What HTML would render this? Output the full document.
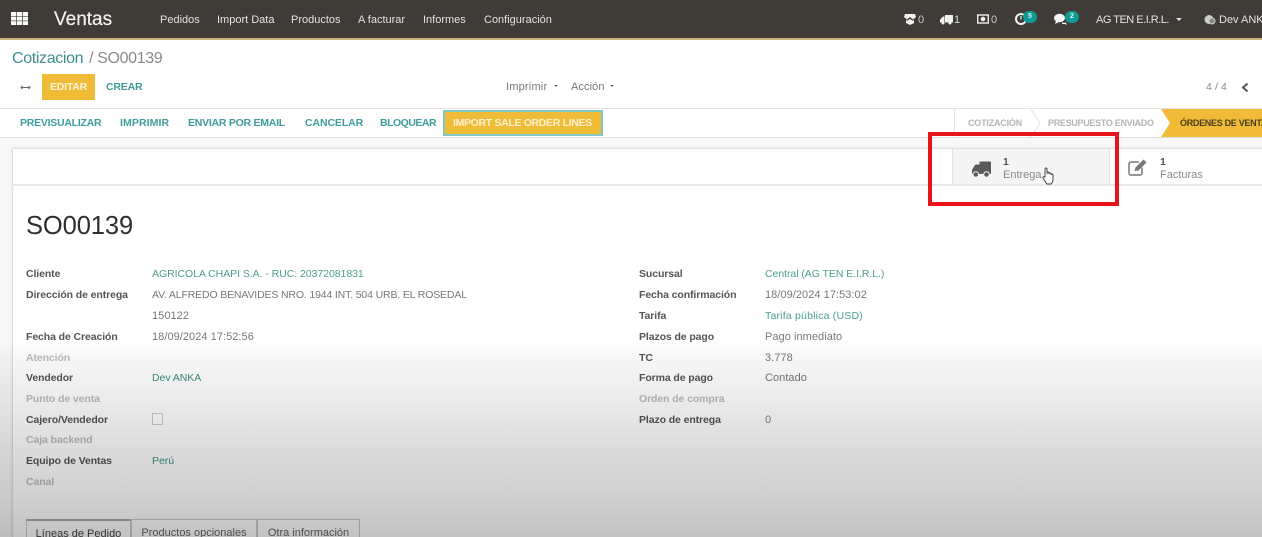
<!DOCTYPE html>
<html lang="es"><head><meta charset="utf-8"><title>Ventas</title>
<style>
html,body{margin:0;padding:0;width:1262px;height:537px;overflow:hidden;background:#fff}
#p{position:relative;width:1262px;height:537px;overflow:hidden;font-family:"Liberation Sans",sans-serif;font-size:11px;color:#666;filter:blur(.35px)}
#p div,#p svg{position:absolute}
.t{white-space:nowrap;line-height:14px}
.nav{color:#e4e3e1;font-size:11px;top:13px}
.act{color:#3f9c9c;font-weight:bold;font-size:10.5px;letter-spacing:-.25px;top:116px}
.l{font-weight:bold;color:#555;left:26px;font-size:10.5px;letter-spacing:-.1px}
.r{font-weight:bold;color:#555;left:639px;font-size:10.5px;letter-spacing:-.1px}
.v{color:#777;font-size:10.5px;letter-spacing:-.15px}
.n{color:#777;font-size:11px;letter-spacing:.05px}
.li{color:#3a8f7e;font-size:10.5px;letter-spacing:-.05px}
.tab{top:519px;height:24px;border:1px solid #ccc;border-bottom:0;box-sizing:border-box;text-align:center;line-height:27px;color:#666;font-size:11px;white-space:nowrap}
</style></head><body><div id="p">
<!-- top bar -->
<div style="left:0;top:0;width:1262px;height:38px;background:#3f3c38"></div>
<div style="left:0;top:38px;width:1262px;height:2px;background:#c9b77e"></div>
<svg style="left:11px;top:12px" width="17" height="13" viewBox="0 0 17 13" fill="#fbfbfb"><rect x="0" y="0" width="5.200" height="4"/><rect x="5.900" y="0" width="5.200" height="4"/><rect x="11.800" y="0" width="5.200" height="4"/><rect x="0" y="4.600" width="5.200" height="4"/><rect x="5.900" y="4.600" width="5.200" height="4"/><rect x="11.800" y="4.600" width="5.200" height="4"/><rect x="0" y="9.200" width="5.200" height="4"/><rect x="5.900" y="9.200" width="5.200" height="4"/><rect x="11.800" y="9.200" width="5.200" height="4"/></svg>
<div class="t" style="left:54px;top:10px;color:#f2f2f2;font-size:19px;line-height:20px;-webkit-text-stroke:.2px #f2f2f2">Ventas</div>
<div class="t nav" style="left:160px">Pedidos</div>
<div class="t nav" style="left:217px">Import Data</div>
<div class="t nav" style="left:291px">Productos</div>
<div class="t nav" style="left:358px">A facturar</div>
<div class="t nav" style="left:423px">Informes</div>
<div class="t nav" style="left:484px">Configuración</div>

<!-- systray -->
<svg style="left:904px;top:14px" width="12" height="11" viewBox="0 0 12 11" fill="#f4f4f4"><path d="M1 0h10l1 3-3 2.500-3-2.500-3 2.500-3-2.500zM2 6l1.200.8L6 5l2.800 1.800L10 6v3l-4 2-4-2z"/></svg>
<div class="t nav" style="left:918px;color:#ccc">0</div>
<svg style="left:940px;top:14px" width="13" height="11" viewBox="0 0 13 11" fill="#f0f0f0"><path d="M5 1h8v7.500H5zM1 4.500 3 2.500h1.500v6H0V6z"/><circle cx="3" cy="9" r="1.500"/><circle cx="10" cy="9" r="1.500"/></svg>
<div class="t nav" style="left:954px;color:#ddd">1</div>
<svg style="left:977px;top:14px" width="12" height="10" viewBox="0 0 12 10"><rect x=".7" y="1" width="10.600" height="8" fill="none" stroke="#f0f0f0" stroke-width="1.400"/><circle cx="6" cy="5" r="2.300" fill="#f0f0f0"/></svg>
<div class="t nav" style="left:991px;color:#ccc">0</div>
<svg style="left:1014px;top:12px" width="14" height="14" viewBox="0 0 14 14" fill="none" stroke="#f4f4f4"><circle cx="7" cy="7" r="5" stroke-width="2"/><path d="M7 4v3.500" stroke-width="1.200"/></svg>
<div style="left:1023px;top:11px;width:14px;height:12px;border-radius:6px;background:#0e9a95"></div>
<div class="t" style="left:1023px;top:11px;width:14px;text-align:center;font-size:7px;line-height:12px;font-weight:bold;color:#e8f5f5">5</div>
<svg style="left:1054px;top:13px" width="14" height="13" viewBox="0 0 14 13" fill="#f4f4f4"><ellipse cx="5.500" cy="5" rx="5.500" ry="4.300"/><path d="M2 8 1 11l4-2z"/><path d="M8 9.800h4l1 2-2.500-.8H8z"/></svg>
<div style="left:1065px;top:11px;width:14px;height:12px;border-radius:6px;background:#0e9a95"></div>
<div class="t" style="left:1065px;top:11px;width:14px;text-align:center;font-size:7px;line-height:12px;font-weight:bold;color:#e8f5f5">2</div>
<div class="t nav" style="left:1096px;letter-spacing:-.5px">AG TEN E.I.R.L.</div>
<div style="left:1176px;top:18px;width:0;height:0;border:3px solid transparent;border-top-color:#ddd;border-bottom:0"></div>
<svg style="left:1204px;top:14px" width="12" height="11" viewBox="0 0 12 11"><circle cx="5" cy="5.500" r="4.500" fill="#ccc"/><circle cx="8" cy="7" r="3" fill="#888" stroke="#ccc"/></svg>
<div class="t nav" style="left:1219px">Dev ANKA</div>

<!-- control panel -->
<div class="t" style="left:12px;top:49px;font-size:16px;line-height:19px;color:#3d8f8f;letter-spacing:-.35px">Cotizacion</div>
<div class="t" style="left:89px;top:49px;font-size:16px;line-height:19px;color:#8a8a8a;letter-spacing:-.35px">/ SO00139</div>
<svg style="left:20px;top:84px" width="11" height="7" viewBox="0 0 11 7" fill="none" stroke="#666" stroke-width="1"><path d="M1 3.500h9M2.500 2 1 3.500 2.500 5M8.500 2 10 3.500 8.500 5"/></svg>
<div style="left:42px;top:74px;width:53px;height:26px;background:#f0bc37"></div>
<div class="t" style="left:42px;top:80px;width:53px;text-align:center;color:#fdf3d8;font-weight:bold;font-size:10.500px;letter-spacing:-.2px">EDITAR</div>
<div class="t" style="left:106px;top:80px;color:#3f9c9c;font-weight:bold;font-size:10.500px;letter-spacing:-.2px">CREAR</div>
<div class="t" style="left:506px;top:80px;color:#777;font-size:11px;letter-spacing:.2px">Imprimir</div>
<div style="left:554px;top:85px;width:0;height:0;border:2.500px solid transparent;border-top-color:#666;border-bottom:0"></div>
<div class="t" style="left:571px;top:80px;color:#777;font-size:11px;letter-spacing:.1px">Acción</div>
<div style="left:610px;top:85px;width:0;height:0;border:2.500px solid transparent;border-top-color:#666;border-bottom:0"></div>
<div class="t" style="left:1206px;top:80px;color:#888;font-size:10.500px;letter-spacing:.1px">4 / 4</div>
<svg style="left:1241px;top:82px" width="8" height="11" viewBox="0 0 8 11" fill="none" stroke="#555" stroke-width="2"><path d="M6.500 1.500 2 5.500l4.500 4"/></svg>

<!-- status bar -->
<div style="left:0;top:108px;width:1262px;height:1px;background:#e4e4e4"></div>
<div style="left:0;top:137px;width:1262px;height:1px;background:#ddd"></div>
<div class="t act" style="left:20px">PREVISUALIZAR</div>
<div class="t act" style="left:120px;letter-spacing:.1px">IMPRIMIR</div>
<div class="t act" style="left:188px">ENVIAR POR EMAIL</div>
<div class="t act" style="left:305px;letter-spacing:-.1px">CANCELAR</div>
<div class="t act" style="left:380px;letter-spacing:-.5px">BLOQUEAR</div>
<div style="left:443px;top:110px;width:160px;height:26px;background:#f0bc37;border:2px solid #7fc8c4;box-sizing:border-box"></div>
<div class="t act" style="left:453px;color:#fdf1d0;letter-spacing:-.33px">IMPORT SALE ORDER LINES</div>
<div style="left:954px;top:109px;width:1px;height:28px;background:#e4e4e4"></div>
<div class="t" style="left:968px;top:116px;color:#b5b5b5;font-weight:bold;font-size:9px;letter-spacing:-.2px">COTIZACIÓN</div>
<svg style="left:1030px;top:109px" width="12" height="28" viewBox="0 0 12 28" fill="none" stroke="#e2e2e2"><path d="M1 0 10 14 1 28"/></svg>
<div class="t" style="left:1048px;top:116px;color:#b5b5b5;font-weight:bold;font-size:9px;letter-spacing:-.3px">PRESUPUESTO ENVIADO</div>
<svg style="left:1161px;top:109px" width="101" height="28" viewBox="0 0 101 28"><path d="M0 0H101V28H0L9 14z" fill="#f0bc37"/></svg>
<div class="t" style="left:1180px;top:116px;color:#4a3e1e;font-weight:bold;font-size:9px;letter-spacing:-.3px">ÓRDENES DE VENTA</div>

<!-- sheet -->
<div style="left:0;top:138px;width:1262px;height:399px;background:#f8f8f8"></div>
<div style="left:12px;top:148px;width:1250px;height:389px;background:#fff;border-left:1px solid #ddd;box-sizing:border-box;box-shadow:0 0 2px #ddd"></div>
<div style="left:12px;top:148px;width:1250px;height:1px;background:#e2e2e2"></div>
<div style="left:12px;top:184px;width:1250px;height:2px;background:#e8e8e8"></div>
<div style="left:952px;top:149px;width:158px;height:35px;background:#f5f5f5;border-left:1px solid #e2e2e2;border-right:1px solid #e2e2e2;box-sizing:border-box"></div>
<svg style="left:972px;top:161px" width="19" height="17" viewBox="0 0 19 17"><path d="M7.500 .5h10.500a1 1 0 0 1 1 1V13H7.500z" fill="#5a5a5a"/><path d="M7.500 3.500V13H0V9L2.800 4.200a1.500 1.500 0 0 1 1.200-.7z" fill="#5a5a5a"/><circle cx="3.800" cy="13.500" r="2.800" fill="#5a5a5a" stroke="#f5f5f5"/><circle cx="14.500" cy="13.500" r="2.800" fill="#5a5a5a" stroke="#f5f5f5"/></svg>
<div class="t" style="left:1003px;top:155px;font-weight:bold;color:#555;font-size:10.500px">1</div>
<div class="t" style="left:1003px;top:168px;color:#888;font-size:11px">Entrega</div>
<svg style="left:1128px;top:158px" width="20" height="19" viewBox="0 0 20 19" fill="none"><path d="M14 9.500V15a2 2 0 0 1-2 2H3a2 2 0 0 1-2-2V6a2 2 0 0 1 2-2h8" stroke="#777" stroke-width="1.500"/><path d="M6.500 13 7.500 9.500 15.500 1.500 18.500 4.500 10.500 12.500z" fill="#777"/></svg>
<div class="t" style="left:1160px;top:155px;font-weight:bold;color:#555;font-size:10.500px">1</div>
<div class="t" style="left:1160px;top:168px;color:#888;font-size:11px">Facturas</div>

<div class="t" style="left:26px;top:211px;font-size:25.500px;line-height:30px;color:#2e2e2e;letter-spacing:-.1px">SO00139</div>

<div class="t l" style="top:267px">Cliente</div>
<div class="t li" style="left:152px;top:267px;color:#4a9f90">AGRICOLA CHAPI S.A. - RUC: 20372081831</div>
<div class="t l" style="top:288px">Dirección de entrega</div>
<div class="t v" style="left:152px;top:288px">AV. ALFREDO BENAVIDES NRO. 1944 INT. 504 URB. EL ROSEDAL</div>
<div class="t n" style="left:152px;top:309px">150122</div>
<div class="t l" style="top:330px">Fecha de Creación</div>
<div class="t n" style="left:152px;top:330px">18/09/2024 17:52:56</div>
<div class="t l" style="top:351px;color:#bbb">Atención</div>
<div class="t l" style="top:371px">Vendedor</div>
<div class="t li" style="left:152px;top:371px">Dev ANKA</div>
<div class="t l" style="top:392px;color:#bbb">Punto de venta</div>
<div class="t l" style="top:413px">Cajero/Vendedor</div>
<div style="left:152px;top:413px;width:11px;height:12px;border:1px solid #ccc;box-sizing:border-box;background:#fff"></div>
<div class="t l" style="top:433px;color:#bbb">Caja backend</div>
<div class="t l" style="top:454px">Equipo de Ventas</div>
<div class="t li" style="left:152px;top:454px">Perú</div>
<div class="t l" style="top:475px;color:#bbb">Canal</div>

<div class="t r" style="top:267px">Sucursal</div>
<div class="t li" style="left:765px;top:267px;color:#4a9f90">Central (AG TEN E.I.R.L.)</div>
<div class="t r" style="top:288px">Fecha confirmación</div>
<div class="t n" style="left:765px;top:288px">18/09/2024 17:53:02</div>
<div class="t r" style="top:309px">Tarifa</div>
<div class="t li" style="left:765px;top:309px;color:#4a9f90;letter-spacing:.2px">Tarifa pública (USD)</div>
<div class="t r" style="top:330px">Plazos de pago</div>
<div class="t n" style="left:765px;top:330px">Pago inmediato</div>
<div class="t r" style="top:351px">TC</div>
<div class="t n" style="left:765px;top:351px">3.778</div>
<div class="t r" style="top:371px">Forma de pago</div>
<div class="t n" style="left:765px;top:371px">Contado</div>
<div class="t r" style="top:392px;color:#bbb">Orden de compra</div>
<div class="t r" style="top:413px">Plazo de entrega</div>
<div class="t n" style="left:765px;top:413px">0</div>

<div class="tab" style="left:26px;width:105px;border-top:2px solid #aaa;color:#444;background:#fff">Líneas de Pedido</div>
<div class="tab" style="left:131px;width:126px">Productos opcionales</div>
<div class="tab" style="left:257px;width:103px">Otra información</div>

<!-- video gradient -->
<div style="left:0;top:340px;width:1262px;height:197px;background:linear-gradient(to bottom,rgba(0,0,0,0) 0%,rgba(0,0,0,.03) 8%,rgba(0,0,0,.08) 30%,rgba(0,0,0,.14) 56%,rgba(0,0,0,.19) 81%,rgba(0,0,0,.24) 100%)"></div>

<!-- red box and cursor -->
<div style="left:928px;top:132px;width:191px;height:74px;border:4px solid #e8141c;box-sizing:border-box"></div>
<svg style="left:1042px;top:167px" width="12" height="18" viewBox="0 0 12 18" fill="#fff" stroke="#333" stroke-width=".9"><path d="M3 9V2a1 1 0 0 1 2 0v5-1a1 1 0 0 1 2 0v1a1 1 0 0 1 2 0v1a1 1 0 0 1 2 0v5c0 2-1 3-2 4H5c-1-1-2-3-4-6-.5-1 .8-1.800 2-1z"/></svg>
</div></body></html>
